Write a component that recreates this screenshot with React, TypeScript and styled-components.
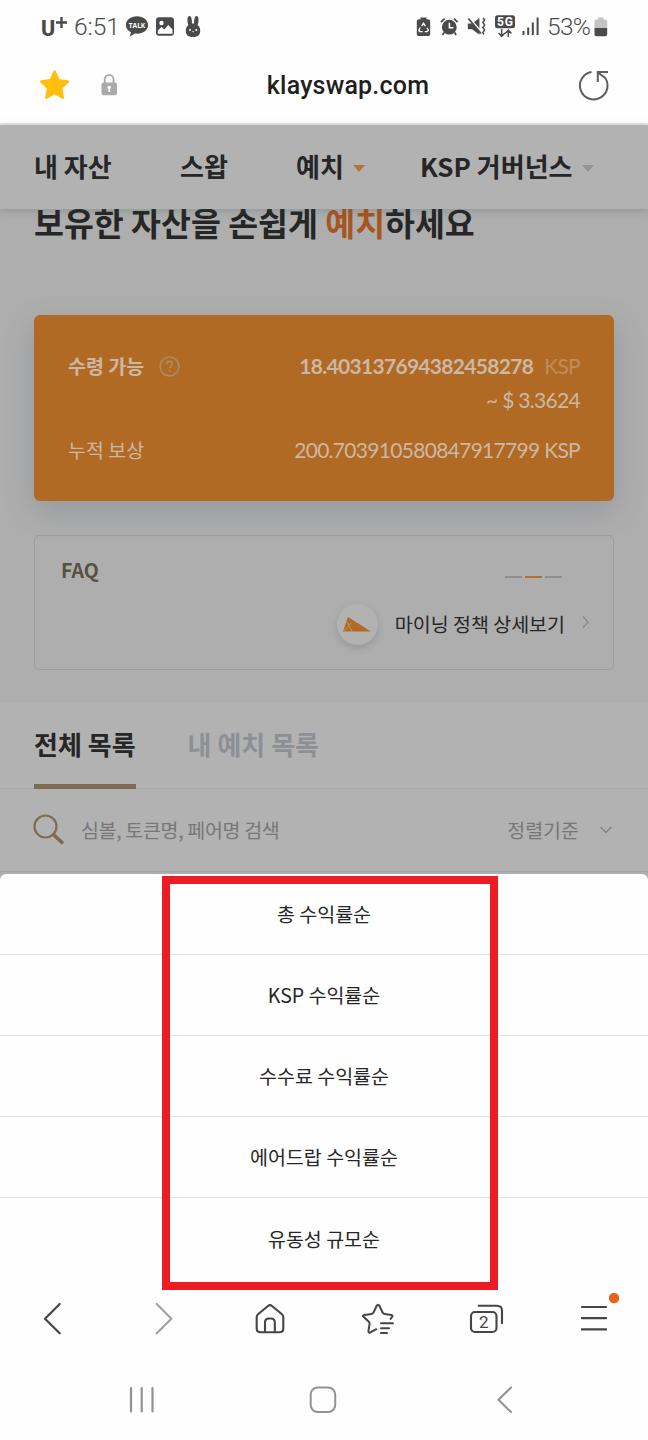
import React from "react";
import styled, { createGlobalStyle, css } from "styled-components";

const GlobalStyle = createGlobalStyle`
  *, *::before, *::after { box-sizing: border-box; }
  body { margin: 0; background: #fefefe; }
`;

const korean = `"Noto Sans CJK KR", "Noto Sans", sans-serif`;
const latin = `Lato, "Noto Sans CJK KR", sans-serif`;

const Screen = styled.div`
  position: relative;
  display: flex;
  flex-direction: column;
  width: 648px;
  height: 1440px;
  overflow: hidden;
  background: #fefefe;
  font-family: ${korean};
  font-size: 19.5px;
  color: #262626;
`;

/* ---------- phone status bar ---------- */

const StatusBar = styled.div`
  display: flex;
  align-items: center;
  justify-content: space-between;
  height: 53px;
  padding: 0 40px 0 41px;
  color: #4a4a4a;
`;

const StatusGroup = styled.div`
  display: flex;
  align-items: center;
`;

const Glyph = styled.svg<{ $left?: number }>`
  display: block;
  flex: none;
  overflow: visible;
  margin-left: ${(p) => p.$left ?? 0}px;
`;

const StatusText = styled.span<{ $width: number; $left: number; $spacing?: number }>`
  width: ${(p) => p.$width}px;
  margin-left: ${(p) => p.$left}px;
  font: 300 24.5px/30px Roboto, sans-serif;
  letter-spacing: ${(p) => p.$spacing ?? 0}px;
  white-space: nowrap;
`;

/* ---------- browser address bar ---------- */

const AddressBar = styled.div`
  display: grid;
  grid-template-columns: 86px 1fr 38px;
  align-items: center;
  height: 72px;
  padding: 0 39px 6px;
  border-bottom: 2px solid #e5e5e5;
`;

const AddressIcons = styled.div<{ $end?: boolean }>`
  display: flex;
  align-items: center;
  justify-content: ${(p) => (p.$end ? "flex-end" : "flex-start")};
`;

const Address = styled.div`
  text-align: center;
  padding-top: 2px;
  font: 500 25px/32px Roboto, sans-serif;
  letter-spacing: 0.2px;
  color: #1f1f1f;
`;

/* ---------- dimmed web page ---------- */

const Page = styled.main`
  display: flex;
  flex-direction: column;
  height: 749px;
  background: #aeaeae;
`;

const SiteNav = styled.nav`
  position: relative;
  z-index: 1;
  display: flex;
  align-items: center;
  flex: none;
  height: 84px;
  padding: 0 0 2px 34px;
  background: #b2b2b2;
  box-shadow: 0 2px 8px rgba(60, 75, 75, 0.25);
`;

const NavItem = styled.div<{ $width: number }>`
  display: flex;
  align-items: center;
  gap: 9px;
  flex: none;
  width: ${(p) => p.$width}px;
  font-size: 26px;
  line-height: 38px;
  font-weight: 700;
  white-space: nowrap;
`;

const Caret = styled.i<{ $color: string }>`
  margin-top: 5px;
  border: 6px solid transparent;
  border-top: 7px solid ${(p) => p.$color};
  border-bottom: 0;
`;

const Title = styled.h1`
  flex: none;
  height: 66px;
  margin: -11px 0 42px;
  padding-left: 34px;
  font-size: 32.5px;
  line-height: 48px;
  font-weight: 700;
  white-space: nowrap;
  em {
    font-style: normal;
    color: #a8561f;
  }
`;

const RewardCard = styled.section`
  flex: none;
  height: 186px;
  margin: 9px 34px 0;
  padding: 34px 34px 0 34px;
  border-radius: 6px;
  background: #b16a24;
  color: #cbb8a4;
  box-shadow: 0 10px 30px rgba(80, 90, 105, 0.26);
`;

const RewardRow = styled.div<{ $height: number }>`
  display: flex;
  align-items: center;
  justify-content: space-between;
  height: ${(p) => p.$height}px;
`;

const RewardLabel = styled.div<{ $bold?: boolean }>`
  display: flex;
  align-items: center;
  gap: 15px;
  line-height: 30px;
  font-weight: ${(p) => (p.$bold ? 700 : 400)};
`;

const Amount = styled.div<{ $bold?: boolean }>`
  margin-left: auto;
  font-family: ${latin};
  font-size: 21px;
  line-height: 30px;
  letter-spacing: -0.7px;
  font-weight: ${(p) => (p.$bold ? 700 : 400)};
  white-space: nowrap;
`;

const Unit = styled.span`
  margin-left: 11px;
  font-weight: 400;
  color: #c08d5b;
`;

const FaqCard = styled.section`
  display: flex;
  flex-direction: column;
  flex: none;
  height: 135px;
  margin: 34px 34px 31px;
  padding: 20px 24px 0 26px;
  border: 1px solid #9a9ea4;
  border-radius: 5px;
`;

const FaqHeader = styled.div`
  display: flex;
  justify-content: space-between;
  height: 46px;
  line-height: 28px;
  font-weight: 700;
  color: #575142;
`;

const Pager = styled.div`
  display: flex;
  gap: 3px;
  padding: 20px 27px 0 0;
`;

const Dash = styled.i<{ $active?: boolean }>`
  width: 17px;
  height: 2px;
  background: ${(p) => (p.$active ? "#b2702e" : "#8c9093")};
`;

const FaqLink = styled.div`
  display: flex;
  align-items: center;
  justify-content: flex-end;
  height: 44px;
  white-space: nowrap;
`;

const LinkText = styled.span`
  padding-bottom: 2px;
`;

const RoundBadge = styled.div`
  display: flex;
  align-items: center;
  justify-content: center;
  width: 41px;
  height: 41px;
  margin-right: 17px;
  border-radius: 50%;
  background: #b2b2b2;
  box-shadow: 0 3px 7px rgba(70, 85, 90, 0.25);
`;

const Tabs = styled.div`
  display: flex;
  flex: none;
  gap: 52px;
  height: 88px;
  padding-left: 34px;
  background: #b2b2b2;
  border-top: 1px solid #a9acac;
  border-bottom: 1px solid #a5a7a8;
`;

const Tab = styled.div<{ $active?: boolean }>`
  height: 88px;
  padding-top: 23px;
  font-size: 26px;
  line-height: 38px;
  font-weight: 700;
  white-space: nowrap;
  color: #8c9096;
  ${(p) =>
    p.$active &&
    css`
      color: #262626;
      border-bottom: 6px solid #7f6b51;
    `}
`;

const SearchRow = styled.div`
  display: flex;
  align-items: center;
  flex: none;
  height: 83px;
  padding: 0 36px 0 33px;
  background: #b2b2b2;
  border-bottom: 1px solid #a2a3a4;
  color: #777;
  white-space: nowrap;
`;

const Placeholder = styled.span`
  flex: 1;
  margin-left: 16px;
  padding-bottom: 2px;
  letter-spacing: -0.33px;
`;

const SortLabel = styled.span`
  padding-bottom: 2px;
`;

/* ---------- sort sheet ---------- */

const SheetBackdrop = styled.div`
  flex: none;
  height: 406px;
  background: #aeaeae;
`;

const Sheet = styled.ul`
  height: 100%;
  margin: 0;
  padding: 0;
  list-style: none;
  background: #fefefe;
  border-radius: 6px 6px 0 0;
`;

const SheetOption = styled.li`
  height: 81px;
  line-height: 79px;
  text-align: center;
  & + & {
    border-top: 1px solid #e2e2e2;
  }
  &:first-child {
    height: 80px;
  }
  &:last-child {
    line-height: 81px;
  }
`;

const Highlight = styled.div`
  position: absolute;
  left: 162px;
  top: 876px;
  width: 336px;
  height: 414px;
  border: 8px solid #ed1c24;
`;

/* ---------- browser toolbar and system navigation ---------- */

const Toolbar = styled.div`
  display: flex;
  align-items: center;
  flex: none;
  height: 78px;
  padding-left: 42px;
`;

const SystemNav = styled.div`
  display: flex;
  align-items: center;
  flex: none;
  height: 82px;
  padding: 2px 0 0 128px;
`;

const sortOptions = ["총 수익률순", "KSP 수익률순", "수수료 수익률순", "에어드랍 수익률순", "유동성 규모순"];

function StatusIconsLeft() {
  return (
    <>
      <Glyph $left={9} width="23" height="22" viewBox="127 16 23 22" fill="#4a4a4a">
        <path d="M138 16.2c-6.2 0-11.1 3.800-11.1 8.700 0 3.200 2 5.900 5 7.400L130.800 36.800l5-3.200c.7.1 1.500.1 2.200.1 6.200 0 11.100-3.900 11.100-8.800s-4.900-8.700-11.100-8.700z" />
        <text x="138" y="28" textAnchor="middle" fontFamily="Open Sans" fontWeight="700" fontSize="7.400" textLength="16.500" lengthAdjust="spacingAndGlyphs" fill="#fff">TALK</text>
      </Glyph>
      <Glyph $left={7} width="19" height="20" viewBox="157 17 19 20">
        <rect x="157" y="17.200" width="18" height="18.500" rx="3" fill="#4a4a4a" />
        <circle cx="162.500" cy="23" r="2.200" fill="#fff" />
        <path d="M158.800 30.500l3.700-3.600 2.800 2.500 4-4.500 4.200 4.500v4.300h-14.700z" fill="#fff" />
      </Glyph>
      <Glyph $left={10} width="16" height="22" viewBox="186 16 16 22">
        <ellipse cx="190.700" cy="21" rx="2.200" ry="5" fill="#4a4a4a" transform="rotate(-5 190.700 21)" />
        <ellipse cx="197.300" cy="21" rx="2.200" ry="5" fill="#4a4a4a" transform="rotate(5 197.300 21)" />
        <path d="M194 23.500c4 0 7.200 2.700 7.200 7 0 4.500-2.400 6.500-7.200 6.500s-7.200-2-7.200-6.500c0-4.300 3.200-7 7.200-7z" fill="#4a4a4a" />
        <circle cx="191" cy="30" r="1" fill="#fff" />
        <circle cx="197.300" cy="30" r="1" fill="#fff" />
        <path d="M193 31.200h2.300l-1.100 1.300z" fill="#fff" />
      </Glyph>
    </>
  );
}

function StatusIconsRight() {
  return (
    <>
      <Glyph width="14" height="20" viewBox="417 16.500 14 20">
        <path d="M420.500 17h6v1.700h1.300c1.500 0 2.400.9 2.400 2.300v12.200c0 1.500-.9 2.400-2.400 2.400h-8.600c-1.500 0-2.400-.9-2.400-2.400V21c0-1.400.9-2.300 2.400-2.300h1.300z" fill="#4a4a4a" />
        <path d="M421.600 25.600l1.900-2.900 1.900 2.900M427 27.200l1.400 2.500-1.200 1.400h-2.400M422.700 31.100h-3l-.9-1.400 1.400-2.700" fill="none" stroke="#fff" strokeWidth="1.300" />
      </Glyph>
      <Glyph $left={9} width="19" height="18" viewBox="440 18 19 18">
        <circle cx="449.300" cy="27.200" r="7.400" fill="#4a4a4a" />
        <path d="M441 22.200l3.600-3.500M457.600 22.200l-3.600-3.500M444 32.500l-1.500 2.500M454.600 32.500l1.500 2.500" stroke="#4a4a4a" strokeWidth="1.800" />
        <path d="M449.400 22.700v5h4" stroke="#fff" strokeWidth="1.500" fill="none" />
      </Glyph>
      <Glyph $left={8} width="19" height="19" viewBox="467 17 19 19">
        <path d="M467.800 23.600h4.300l7.300-5.600v16.800l-7.300-5.600h-4.300z" fill="#4a4a4a" />
        <path d="M469.700 18.200l12.500 14.500" stroke="#fff" strokeWidth="1.600" />
        <path d="M468.300 18.500l12.700 15" stroke="#4a4a4a" strokeWidth="1.700" />
        <path d="M483 18l1.700 2-1.900 2.500 1.900 2.500-1.900 2.500 1.900 2.500-1.900 2.500 1.200 1.800" stroke="#4a4a4a" strokeWidth="1.400" fill="none" />
      </Glyph>
      <Glyph $left={9} width="20" height="23" viewBox="495 14 20 23">
        <rect x="495" y="14.200" width="20" height="13" rx="2.500" fill="#4a4a4a" />
        <text x="505" y="25" textAnchor="middle" fontFamily="Roboto" fontWeight="700" fontSize="12" textLength="16" fill="#fff">5G</text>
        <path d="M501.700 28v6.500M498.600 32l3.100 3.300 3.100-3.300M508.300 36v-6.500M505.200 32.500l3.100-3.300 3.100 3.300" stroke="#4a4a4a" strokeWidth="1.500" fill="none" />
      </Glyph>
      <Glyph $left={7} width="18" height="19" viewBox="522 17 18 19">
        <path d="M523.500 31v4M528.200 27.500V35M532.800 22.500V35M537.600 17.500V35" stroke="#4a4a4a" strokeWidth="2" />
      </Glyph>
      <StatusText $width={43} $left={7} $spacing={-0.7}>53%</StatusText>
      <Glyph $left={4} width="14" height="20" viewBox="594 16.500 14 20">
        <path d="M598 17h5.500v2h1.700c1.200 0 2 .8 2 2v6.500h-12.700V21c0-1.200.8-2 2-2h1.500z" fill="#c4c4c4" />
        <path d="M594.500 27.500h12.700v6.200c0 1.200-.8 2-2 2h-8.700c-1.200 0-2-.8-2-2z" fill="#4a4a4a" />
      </Glyph>
    </>
  );
}

export default function App() {
  return (
    <Screen>
      <GlobalStyle />
      <StatusBar>
        <StatusGroup>
          <Glyph width="26" height="22" viewBox="41 15 26 22" fill="#4a4a4a" fontFamily="Roboto, sans-serif">
            <text x="41" y="34.500" fontSize="21.500" fontWeight="800">U</text>
            <path d="M61.500 16v11M56 21.500h11" stroke="#4a4a4a" strokeWidth="2.400" />
          </Glyph>
          <StatusText $width={43} $left={7}>6:51</StatusText>
          <StatusIconsLeft />
        </StatusGroup>
        <StatusGroup>
          <StatusIconsRight />
        </StatusGroup>
      </StatusBar>

      <AddressBar>
        <AddressIcons>
          <Glyph width="31" height="30" viewBox="39 70 31 30">
            <path d="M54.600 71.500l4 8.800 9.500 1.200-7 6.600 1.800 9.500-8.300-4.600-8.300 4.600 1.800-9.500-7-6.600 9.500-1.200z" fill="#ffbf0a" stroke="#ffbf0a" strokeWidth="2.400" strokeLinejoin="round" />
          </Glyph>
          <Glyph $left={31} width="17" height="22" viewBox="101 74 17 22">
            <path d="M104.700 83v-3.700a4.400 4.400 0 018.800 0V83" fill="none" stroke="#aaa" strokeWidth="1.800" />
            <rect x="101.500" y="82.500" width="15.500" height="12.700" rx="2" fill="#aaa" />
            <path d="M109.200 88v4" stroke="#fff" strokeWidth="1.700" />
            <circle cx="109.200" cy="87.500" r="1.700" fill="#fff" />
          </Glyph>
        </AddressIcons>
        <Address>klayswap.com</Address>
        <AddressIcons $end>
          <Glyph width="31" height="31" viewBox="578 69 31 31" fill="none" stroke="#5e5e5e" strokeWidth="2">
            <path d="M591.500 71A13.800 13.800 0 10604.500 76M597.800 81V71H608M598 71.500l6.500 5" />
          </Glyph>
        </AddressIcons>
      </AddressBar>

      <Page>
        <SiteNav>
          <NavItem $width={146}>내 자산</NavItem>
          <NavItem $width={116}>스왑</NavItem>
          <NavItem $width={124}>예치<Caret $color="#b87333" /></NavItem>
          <NavItem $width={180}>KSP 거버넌스<Caret $color="#949494" /></NavItem>
        </SiteNav>
        <Title>보유한 자산을 손쉽게 <em>예치</em>하세요</Title>
        <RewardCard>
          <RewardRow $height={34}>
            <RewardLabel $bold>
              수령 가능
              <Glyph width="21" height="21" viewBox="0 0 21 21" fill="none" stroke="#ad8c68" strokeWidth="1.500">
                <circle cx="10.500" cy="10.500" r="9.400" />
                <path d="M7.700 8c0-1.700 1.200-2.700 2.800-2.700s2.800 1 2.800 2.500c0 2-2.700 2.200-2.700 4.400M10.600 14v1.700" />
              </Glyph>
            </RewardLabel>
            <Amount $bold>18.403137694382458278<Unit>KSP</Unit></Amount>
          </RewardRow>
          <RewardRow $height={34}>
            <Amount>~ $ 3.3624</Amount>
          </RewardRow>
          <RewardRow $height={66}>
            <RewardLabel>누적 보상</RewardLabel>
            <Amount>200.703910580847917799 KSP</Amount>
          </RewardRow>
        </RewardCard>

        <FaqCard>
          <FaqHeader>
            FAQ
            <Pager>
              <Dash />
              <Dash $active />
              <Dash />
            </Pager>
          </FaqHeader>
          <FaqLink>
            <RoundBadge>
              <Glyph width="29" height="15" viewBox="0 0 29 15">
                <path d="M5 0L28 14.500H0z" fill="#b26b24" />
                <path d="M4 4.500l5 10M1 14l7-8" stroke="#c29a6e" strokeWidth=".8" />
              </Glyph>
            </RoundBadge>
            <LinkText>마이닝 정책 상세보기</LinkText>
            <Glyph $left={17} width="7" height="14" viewBox="0 1 7 14" fill="none" stroke="#85888a" strokeWidth="1.300">
              <path d="M1 .5l5 5.500-5 5.500" />
            </Glyph>
          </FaqLink>
        </FaqCard>

        <Tabs>
          <Tab $active>전체 목록</Tab>
          <Tab>내 예치 목록</Tab>
        </Tabs>
        <SearchRow>
          <Glyph width="32" height="32" viewBox="33 814 32 32" fill="none" stroke="#7f6b51">
            <circle cx="45.500" cy="826.500" r="11" strokeWidth="2.200" />
            <path d="M53.500 834.500l9.500 9" strokeWidth="3.600" />
          </Glyph>
          <Placeholder>심볼, 토큰명, 페어명 검색</Placeholder>
          <SortLabel>정렬기준</SortLabel>
          <Glyph $left={21} width="12" height="8" viewBox="0 0 12 8" fill="none" stroke="#7f8284" strokeWidth="1.300">
            <path d="M.7 1l5.300 5.500L11.300 1" />
          </Glyph>
        </SearchRow>
      </Page>

      <SheetBackdrop>
        <Sheet>
          {sortOptions.map((label) => (
            <SheetOption key={label}>{label}</SheetOption>
          ))}
        </Sheet>
      </SheetBackdrop>

      <Toolbar>
        <Glyph width="22" height="34" viewBox="42 1302 22 34" fill="none" stroke="#454545" strokeWidth="2.200" strokeLinecap="round" strokeLinejoin="round">
          <path d="M59.700 1304L45 1318.700l14.700 14.600" />
        </Glyph>
        <Glyph $left={90} width="22" height="34" viewBox="154 1302 22 34" fill="none" stroke="#a2a2a2" strokeWidth="2.200" strokeLinecap="round" strokeLinejoin="round">
          <path d="M156.700 1304l14.700 14.700-14.700 14.600" />
        </Glyph>
        <Glyph $left={79} width="30" height="34" viewBox="255 1302 30 34" fill="none" stroke="#454545" strokeWidth="2.100" strokeLinejoin="round">
          <path d="M268 1306L258 1314.300q-1.300 1.200-1.300 3v11.200q0 3.700 3.700 3.700h19q3.900 0 3.900-3.700v-11.200q0-1.800-1.300-3L272 1306q-2-1.600-4 0z" />
          <path d="M265 1332v-9.500q0-4 4-4h1.800q4 0 4 4v9.500" />
        </Glyph>
        <Glyph $left={76} width="34" height="34" viewBox="361 1302 34 34" fill="none" stroke="#454545" strokeWidth="2" strokeLinecap="round" strokeLinejoin="round">
          <path d="M390.500 1319l1.700-2.400q.8-1.300-.8-1.700l-6.800-1q-1.400-.2-2-1.400l-3.300-6.700q-1.300-2.200-2.600 0l-3.200 6.700q-.7 1.200-2 1.400l-7 1q-2.600.5-.7 2.200l5 4.700q1 1 .8 2.300l-1.200 6.800q0 2.600 2.400 1.300l5.500-3" />
          <path d="M381 1323.200h12M381 1328.200h8M381 1333h6" />
        </Glyph>
        <Glyph $left={74} width="36" height="34" viewBox="469 1302 36 34" fill="none" stroke="#454545" strokeWidth="2.100" strokeLinecap="round">
          <path d="M478.700 1305.700H497q5 0 5 5v12.500" />
          <rect x="471" y="1312" width="25.500" height="20" rx="4" />
          <text x="483.700" y="1328" textAnchor="middle" fontFamily="Roboto" fontSize="17" fill="#454545" stroke="none">2</text>
        </Glyph>
        <Glyph $left={75} width="42" height="34" viewBox="580 1302 42 34">
          <path d="M582 1307h24M582 1318.200h24M582 1329.400h24" stroke="#454545" strokeWidth="2.200" strokeLinecap="round" />
          <circle cx="614" cy="1298" r="5.200" fill="#e8641b" />
        </Glyph>
      </Toolbar>

      <SystemNav>
        <Glyph width="28" height="30" viewBox="128 1385 28 30" stroke="#929292" strokeWidth="2.200" strokeLinecap="round">
          <path d="M131 1388v23.500M141.700 1388v23.500M152.500 1388v23.500" />
        </Glyph>
        <Glyph $left={152} width="30" height="30" viewBox="308 1385 30 30" fill="none" stroke="#929292" strokeWidth="2">
          <rect x="310.700" y="1387.500" width="24.500" height="24.500" rx="7" />
        </Glyph>
        <Glyph $left={157} width="20" height="30" viewBox="495 1385 20 30" fill="none" stroke="#929292" strokeWidth="2.100" strokeLinecap="round" strokeLinejoin="round">
          <path d="M511 1387.500l-12.500 12.300 12.500 12.300" />
        </Glyph>
      </SystemNav>

      <Highlight />
    </Screen>
  );
}
